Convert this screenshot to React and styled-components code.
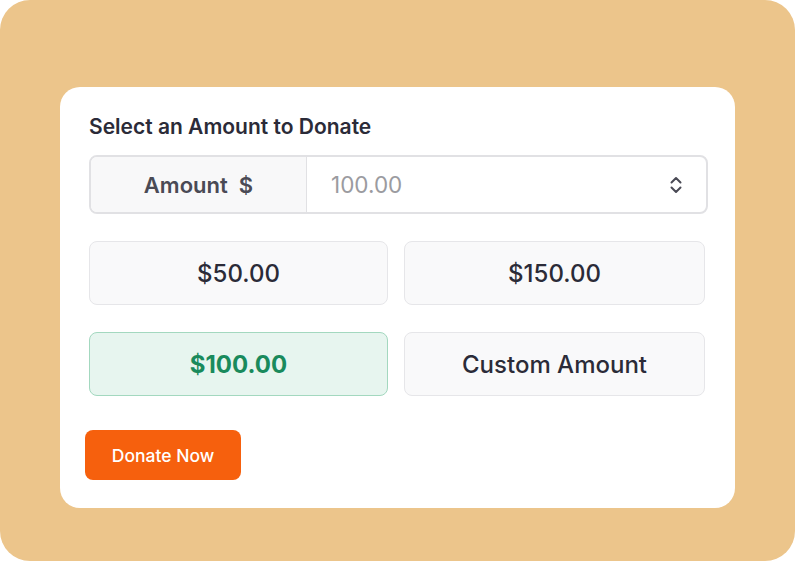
import React from 'react';
import styled, { createGlobalStyle } from 'styled-components';

const GlobalStyle = createGlobalStyle`
  html, body {
    margin: 0;
    padding: 0;
    background: #ffffff;
  }
  body {
    font-family: Inter, 'Noto Sans', sans-serif;
  }
`

const Backdrop = styled.div`
  width: 795px;
  height: 561px;
  box-sizing: border-box;
  background: #ecc58b;
  border-radius: 30px;
  padding: 87px 60px 53px 60px;
`

const Card = styled.div`
  width: 675px;
  height: 421px;
  box-sizing: border-box;
  background: #ffffff;
  border-radius: 20px;
  padding: 27px 27px 0 29px;
  display: flex;
  flex-direction: column;
`

const Title = styled.div`
  font-size: 21px;
  font-weight: 600;
  line-height: 26px;
  color: #2b2b38;
`

const InputGroup = styled.div`
  margin-top: 15px;
  height: 59px;
  box-sizing: border-box;
  border: 2px solid #e1e1e4;
  border-radius: 8px;
  display: flex;
  overflow: hidden;
`

const Addon = styled.div`
  width: 215px;
  background: #f8f8f9;
  border-right: 1.5px solid #e1e1e4;
  display: flex;
  align-items: center;
  justify-content: center;
  font-size: 22px;
  font-weight: 600;
  color: #4a4a55;
  white-space: pre;
`

const Field = styled.div`
  flex: 1;
  display: flex;
  align-items: center;
  justify-content: space-between;
  padding: 0 22px 0 24px;
`

const Placeholder = styled.span`
  font-size: 22.5px;
  color: #9b9ba0;
`

const Spinner = styled.svg`
  width: 16px;
  height: 20px;
  color: #4a4a55;
`

const AmountGrid = styled.div`
  margin-top: 27px;
  margin-right: 3px;
  display: grid;
  grid-template-columns: 299px 301px;
  column-gap: 16px;
  row-gap: 27px;
`

const AmountButton = styled.button`
  height: 64px;
  box-sizing: border-box;
  border-radius: 8px;
  border: 1.5px solid ${props => props.selected ? '#a3d8bf' : '#e6e6e9'};
  background: ${props => props.selected ? '#e7f5ef' : '#f9f9fa'};
  color: ${props => props.selected ? '#198a5c' : '#2b2b38'};
  font-family: Inter, 'Noto Sans', sans-serif;
  font-size: 24px;
  font-weight: ${props => props.selected ? 700 : 450};
  cursor: pointer;
`

const DonateButton = styled.button`
  margin-top: 34px;
  margin-left: -4px;
  width: 156px;
  height: 50px;
  border: none;
  border-radius: 8px;
  background: #f6600d;
  color: #ffffff;
  font-family: Inter, 'Noto Sans', sans-serif;
  font-size: 17.5px;
  font-weight: 500;
  cursor: pointer;
`

const amounts = [
  { label: '$50.00' },
  { label: '$150.00' },
  { label: '$100.00', selected: true },
  { label: 'Custom Amount' },
];

export default function App() {
  return (
    <>
      <GlobalStyle />
      <Backdrop>
        <Card>
          <Title>Select an Amount to Donate</Title>
          <InputGroup>
            <Addon>{'Amount  $'}</Addon>
            <Field>
              <Placeholder>100.00</Placeholder>
              <Spinner viewBox="0 0 16 20" fill="none" stroke="currentColor" strokeWidth="2" strokeLinecap="round" strokeLinejoin="round">
                <path d="M3.5 7.5 L8 3 L12.5 7.5" />
                <path d="M3.5 12.5 L8 17 L12.5 12.5" />
              </Spinner>
            </Field>
          </InputGroup>
          <AmountGrid>
            {amounts.map(a => (
              <AmountButton key={a.label} selected={a.selected}>{a.label}</AmountButton>
            ))}
          </AmountGrid>
          <div>
            <DonateButton>Donate Now</DonateButton>
          </div>
        </Card>
      </Backdrop>
    </>
  )
}
